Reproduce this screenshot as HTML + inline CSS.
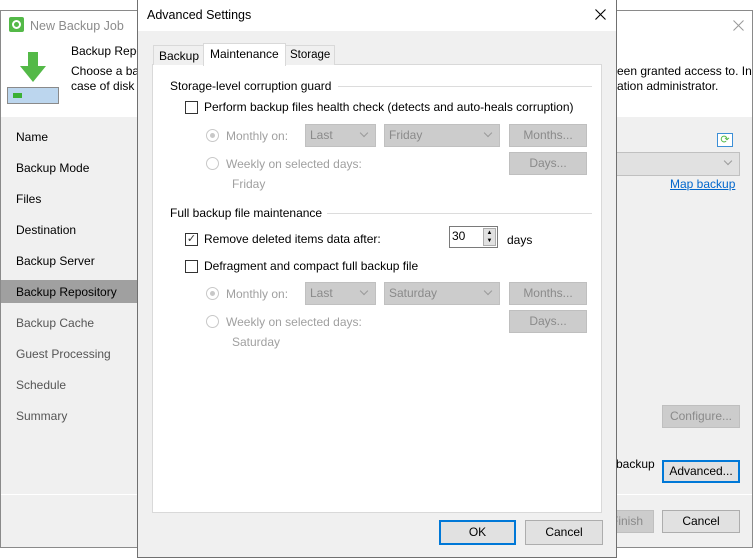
<!DOCTYPE html>
<html><head><style>
*{margin:0;padding:0;box-sizing:border-box}
body{width:754px;height:558px;position:relative;overflow:hidden;background:#fff;font-family:"Liberation Sans",sans-serif;font-size:12px;color:#000}
.a{position:absolute;white-space:nowrap}
.g{color:#a0a0a0}
.btn{position:absolute;background:#e1e1e1;border:1px solid #adadad;text-align:center;line-height:21px}
.dis{background:#cccccc;border:1px solid #bfbfbf;color:#8a8a8a}
.cb{position:absolute;width:13px;height:13px;border:1px solid #333;background:#fff}
.rb{position:absolute;width:13px;height:13px;border:1px solid #c8c8c8;border-radius:50%;background:#fff}
.combo{position:absolute;background:#cccccc;border:1px solid #c0c0c0;color:#8a8a8a;padding-left:4px;line-height:20px}
.combo:after{content:"";position:absolute;right:8px;top:5px;width:5px;height:5px;border-right:1px solid #9a9a9a;border-bottom:1px solid #9a9a9a;transform:rotate(45deg)}
.line{position:absolute;height:1px;background:#dcdcdc}
</style></head><body>
<div class="a" style="left:0;top:10px;width:753px;height:538px;border:1px solid #8a8a8a;background:#f0f0f0"></div>
<div class="a" style="left:1px;top:11px;width:751px;height:106px;background:#fff"></div>
<div class="a" style="left:9px;top:17px;width:15px;height:15px;background:#54b948;border-radius:2px"></div>
<div class="a" style="left:12px;top:20px;width:9px;height:9px;border:2px solid #fff;border-radius:50%"></div>
<div class="a g" style="left:30px;top:19px;font-size:12.5px;color:#8c8c8c">New Backup Job</div>
<svg class="a" style="left:733px;top:20px" width="11" height="11" viewBox="0 0 11 11"><path d="M0.5 0.5L10.5 10.5M10.5 0.5L0.5 10.5" stroke="#999" stroke-width="1"/></svg>
<svg class="a" style="left:18px;top:52px" width="30" height="32" viewBox="0 0 30 32"><path d="M10 0h10v14h8L15 30 2 14h8z" fill="#54b948"/></svg>
<div class="a" style="left:7px;top:87px;width:52px;height:17px;background:#bcd6ee;border:1px solid #8a8a8a"></div>
<div class="a" style="left:13px;top:93px;width:9px;height:5px;background:#3cb034"></div>
<div class="a" style="left:71px;top:44px">Backup Repository</div>
<div class="a" style="left:71px;top:64px">Choose a backup repository</div>
<div class="a" style="left:71px;top:79px">case of disk s</div>
<div class="a" style="left:617px;top:64px">een granted access to. In</div>
<div class="a" style="left:617px;top:79px">ation administrator.</div>
<div class="a" style="left:1px;top:280px;width:137px;height:23px;background:#a0a0a0"></div>
<div class="a" style="left:16px;top:130px">Name</div>
<div class="a" style="left:16px;top:161px">Backup Mode</div>
<div class="a" style="left:16px;top:192px">Files</div>
<div class="a" style="left:16px;top:223px">Destination</div>
<div class="a" style="left:16px;top:254px">Backup Server</div>
<div class="a" style="left:16px;top:285px">Backup Repository</div>
<div class="a" style="left:16px;top:316px;color:#555">Backup Cache</div>
<div class="a" style="left:16px;top:347px;color:#555">Guest Processing</div>
<div class="a" style="left:16px;top:378px;color:#555">Schedule</div>
<div class="a" style="left:16px;top:409px;color:#555">Summary</div>
<div class="a" style="left:717px;top:133px;width:16px;height:14px;border:1px solid #3c8fd6;background:#fff;color:#54b948;font-size:11px;line-height:12px;text-align:center">⟳</div>
<div class="combo" style="left:612px;top:152px;width:128px;height:24px;background:#e1e1e1"></div>
<div class="a" style="left:670px;top:177px;color:#0066cc;text-decoration:underline">Map backup</div>
<div class="btn dis" style="left:662px;top:405px;width:78px;height:23px">Configure...</div>
<div class="a" style="left:616px;top:457px">backup</div>
<div class="btn" style="left:662px;top:460px;width:78px;height:23px;border:2px solid #0078d7;line-height:19px">Advanced...</div>
<div class="a" style="left:1px;top:494px;width:751px;height:1px;background:#fff"></div>
<div class="btn dis" style="left:600px;top:510px;width:54px;height:23px">Finish</div>
<div class="btn" style="left:662px;top:510px;width:78px;height:23px">Cancel</div>

<div class="a" style="left:137px;top:0;width:480px;height:558px;border:1px solid #707070;background:#f0f0f0"></div>
<div class="a" style="left:138px;top:0;width:478px;height:31px;background:#fff"></div>
<div class="a" style="left:147px;top:8px;font-size:12.5px">Advanced Settings</div>
<svg class="a" style="left:595px;top:9px" width="11" height="11" viewBox="0 0 11 11"><path d="M0.5 0.5L10.5 10.5M10.5 0.5L0.5 10.5" stroke="#000" stroke-width="1.1"/></svg>
<div class="a" style="left:152px;top:64px;width:450px;height:449px;background:#fff;border:1px solid #d9d9d9"></div>
<div class="a" style="left:153px;top:45px;width:51px;height:20px;background:#f0f0f0;border:1px solid #d9d9d9;border-bottom:none;padding:3px 0 0 5px">Backup</div>
<div class="a" style="left:285px;top:45px;width:50px;height:20px;background:#f0f0f0;border:1px solid #d9d9d9;border-bottom:none;padding:3px 0 0 4px;font-size:11.5px">Storage</div>
<div class="a" style="left:203px;top:43px;width:83px;height:23px;background:#fff;border:1px solid #d9d9d9;border-bottom:none;padding:3px 0 0 6px">Maintenance</div>

<div class="a" style="left:170px;top:79px">Storage-level corruption guard</div>
<div class="line" style="left:338px;top:86px;width:254px"></div>
<div class="cb" style="left:185px;top:101px"></div>
<div class="a" style="left:204px;top:100px">Perform backup files health check (detects and auto-heals corruption)</div>
<div class="rb" style="left:206px;top:129px"></div><div class="a" style="left:210px;top:133px;width:5px;height:5px;border-radius:50%;background:#c8c8c8"></div>
<div class="a g" style="left:226px;top:129px">Monthly on:</div>
<div class="combo" style="left:305px;top:124px;width:71px;height:23px">Last</div>
<div class="combo" style="left:384px;top:124px;width:116px;height:23px">Friday</div>
<div class="btn dis" style="left:509px;top:124px;width:78px;height:23px">Months...</div>
<div class="rb" style="left:206px;top:157px"></div>
<div class="a g" style="left:226px;top:157px">Weekly on selected days:</div>
<div class="btn dis" style="left:509px;top:152px;width:78px;height:23px">Days...</div>
<div class="a g" style="left:232px;top:177px">Friday</div>

<div class="a" style="left:170px;top:206px">Full backup file maintenance</div>
<div class="line" style="left:327px;top:213px;width:265px"></div>
<div class="cb" style="left:185px;top:233px;font-size:11px;line-height:11px;text-align:center;color:#333">✓</div>
<div class="a" style="left:204px;top:232px">Remove deleted items data after:</div>
<div class="a" style="left:449px;top:226px;width:49px;height:22px;border:1px solid #7a7a7a;background:#fff;padding:2px 0 0 2px">30</div>
<div class="a" style="left:483px;top:228px;width:13px;height:18px;background:#e1e1e1;border:1px solid #adadad;font-size:6px;line-height:8px;text-align:center">▲<br>▼</div>
<div class="a" style="left:507px;top:233px">days</div>
<div class="cb" style="left:185px;top:260px"></div>
<div class="a" style="left:204px;top:259px">Defragment and compact full backup file</div>
<div class="rb" style="left:206px;top:287px"></div><div class="a" style="left:210px;top:291px;width:5px;height:5px;border-radius:50%;background:#c8c8c8"></div>
<div class="a g" style="left:226px;top:287px">Monthly on:</div>
<div class="combo" style="left:305px;top:282px;width:71px;height:23px">Last</div>
<div class="combo" style="left:384px;top:282px;width:116px;height:23px">Saturday</div>
<div class="btn dis" style="left:509px;top:282px;width:78px;height:23px">Months...</div>
<div class="rb" style="left:206px;top:315px"></div>
<div class="a g" style="left:226px;top:315px">Weekly on selected days:</div>
<div class="btn dis" style="left:509px;top:310px;width:78px;height:23px">Days...</div>
<div class="a g" style="left:232px;top:335px">Saturday</div>

<div class="btn" style="left:439px;top:520px;width:77px;height:25px;border:2px solid #0078d7">OK</div>
<div class="btn" style="left:525px;top:520px;width:78px;height:25px;line-height:23px">Cancel</div>
</body></html>
